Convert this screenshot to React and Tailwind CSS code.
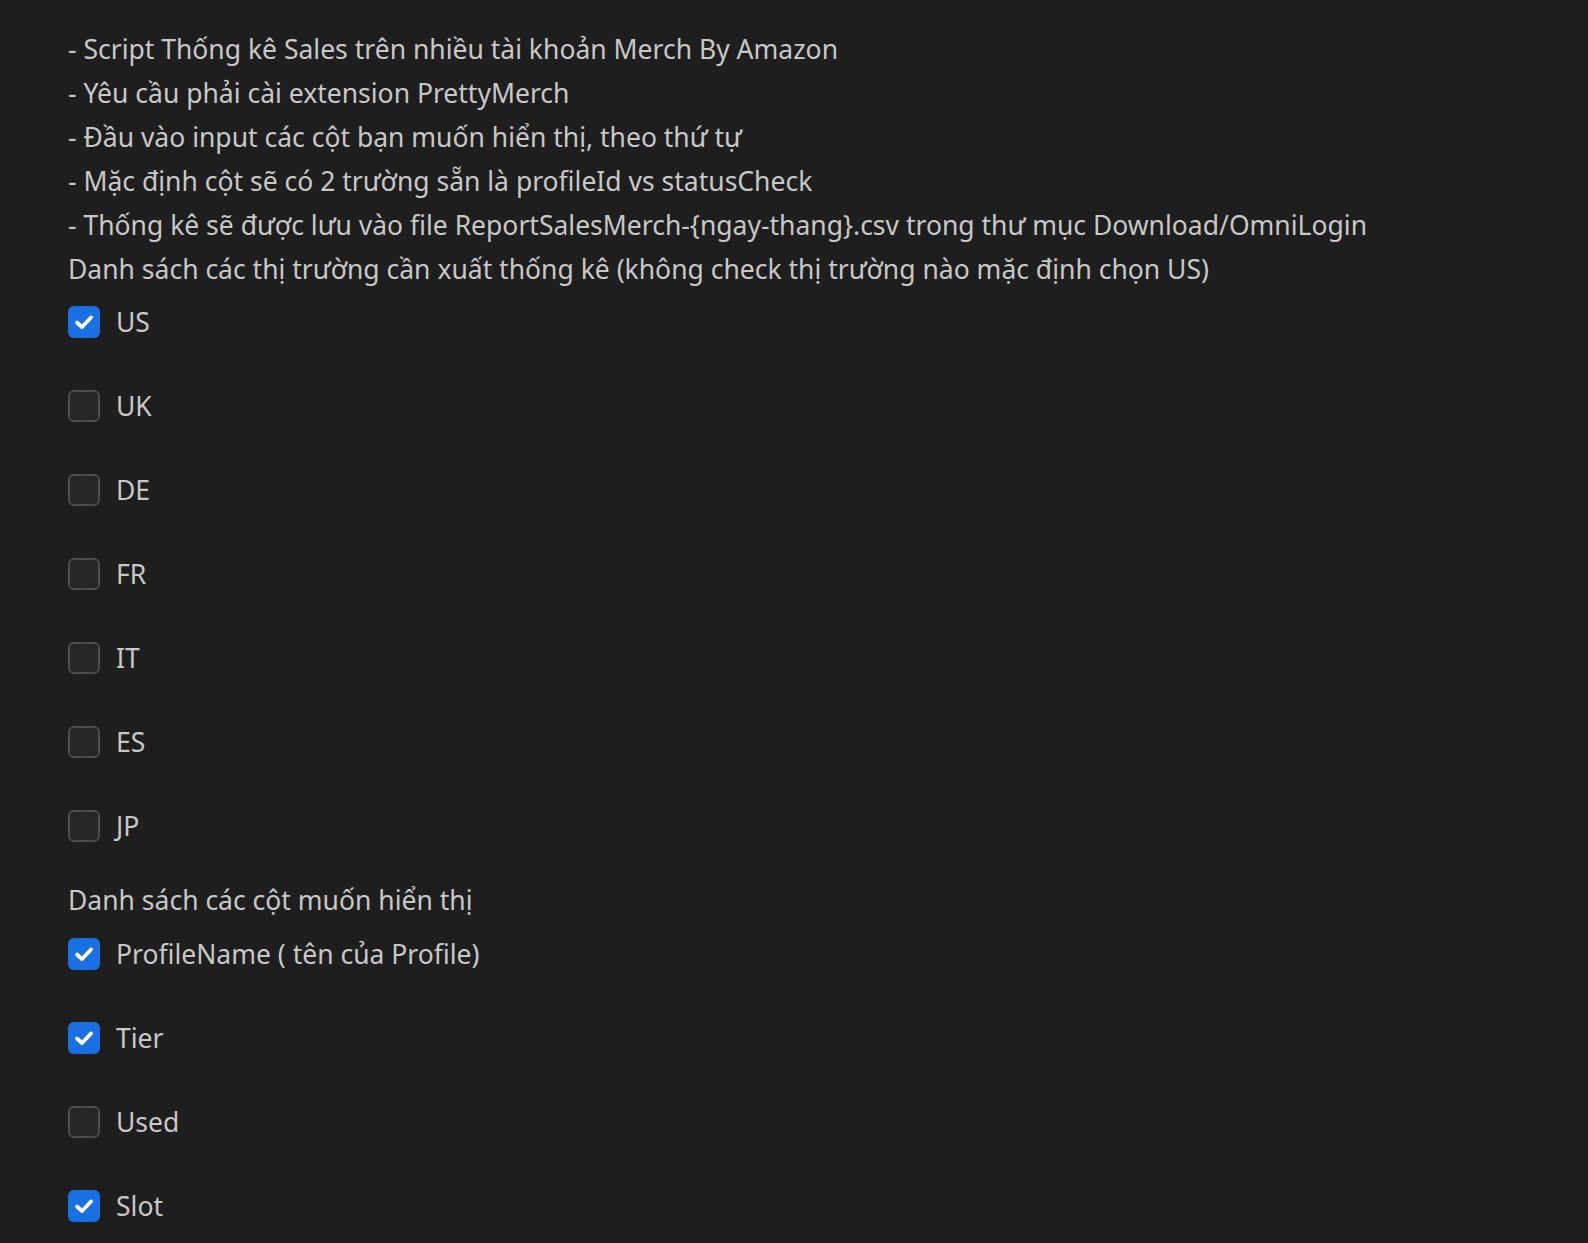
const notes = [
  '- Script Thống kê Sales trên nhiều tài khoản Merch By Amazon',
  '- Yêu cầu phải cài extension PrettyMerch',
  '- Đầu vào input các cột bạn muốn hiển thị, theo thứ tự',
  '- Mặc định cột sẽ có 2 trường sẵn là profileId vs statusCheck',
  '- Thống kê sẽ được lưu vào file ReportSalesMerch-{ngay-thang}.csv trong thư mục Download/OmniLogin',
]

const markets = [
  { label: 'US', checked: true },
  { label: 'UK', checked: false },
  { label: 'DE', checked: false },
  { label: 'FR', checked: false },
  { label: 'IT', checked: false },
  { label: 'ES', checked: false },
  { label: 'JP', checked: false },
]

const columns = [
  { label: 'ProfileName ( tên của Profile)', checked: true },
  { label: 'Tier', checked: true },
  { label: 'Used', checked: false },
  { label: 'Slot', checked: true },
]

function CheckRow({ label, checked }) {
  return (
    <label className="flex items-center gap-4 h-[44px] mb-[40px] cursor-pointer">
      {checked ? (
        <span className="w-8 h-8 rounded-md bg-[#1a6fe3] flex items-center justify-center">
          <svg width="24" height="24" viewBox="0 0 24 24" fill="none">
            <path d="M5 12.5l5 4.5L19 7.5" stroke="#fff" strokeWidth="3.8" strokeLinecap="round" strokeLinejoin="round" />
          </svg>
        </span>
      ) : (
        <span className="w-8 h-8 rounded-md bg-[#262626] border-2 border-[#4d4d4d]" />
      )}
      <span>{label}</span>
    </label>
  )
}

export default function App() {
  return (
    <div
      className="min-h-screen bg-[#1e1e1e] text-[#c8c8c8] text-[26.5px] leading-[44px] pl-[68px] pt-[27px]"
      style={{ fontFamily: '"Noto Sans", "Open Sans", sans-serif' }}
    >
      {notes.map((n) => (
        <p key={n}>{n}</p>
      ))}
      <p className="mb-[9px]">Danh sách các thị trường cần xuất thống kê (không check thị trường nào mặc định chọn US)</p>
      {markets.map((m) => (
        <CheckRow key={m.label} {...m} />
      ))}
      <p className="-mt-[10px] mb-[10px]">Danh sách các cột muốn hiển thị</p>
      {columns.map((c) => (
        <CheckRow key={c.label} {...c} />
      ))}
    </div>
  )
}
